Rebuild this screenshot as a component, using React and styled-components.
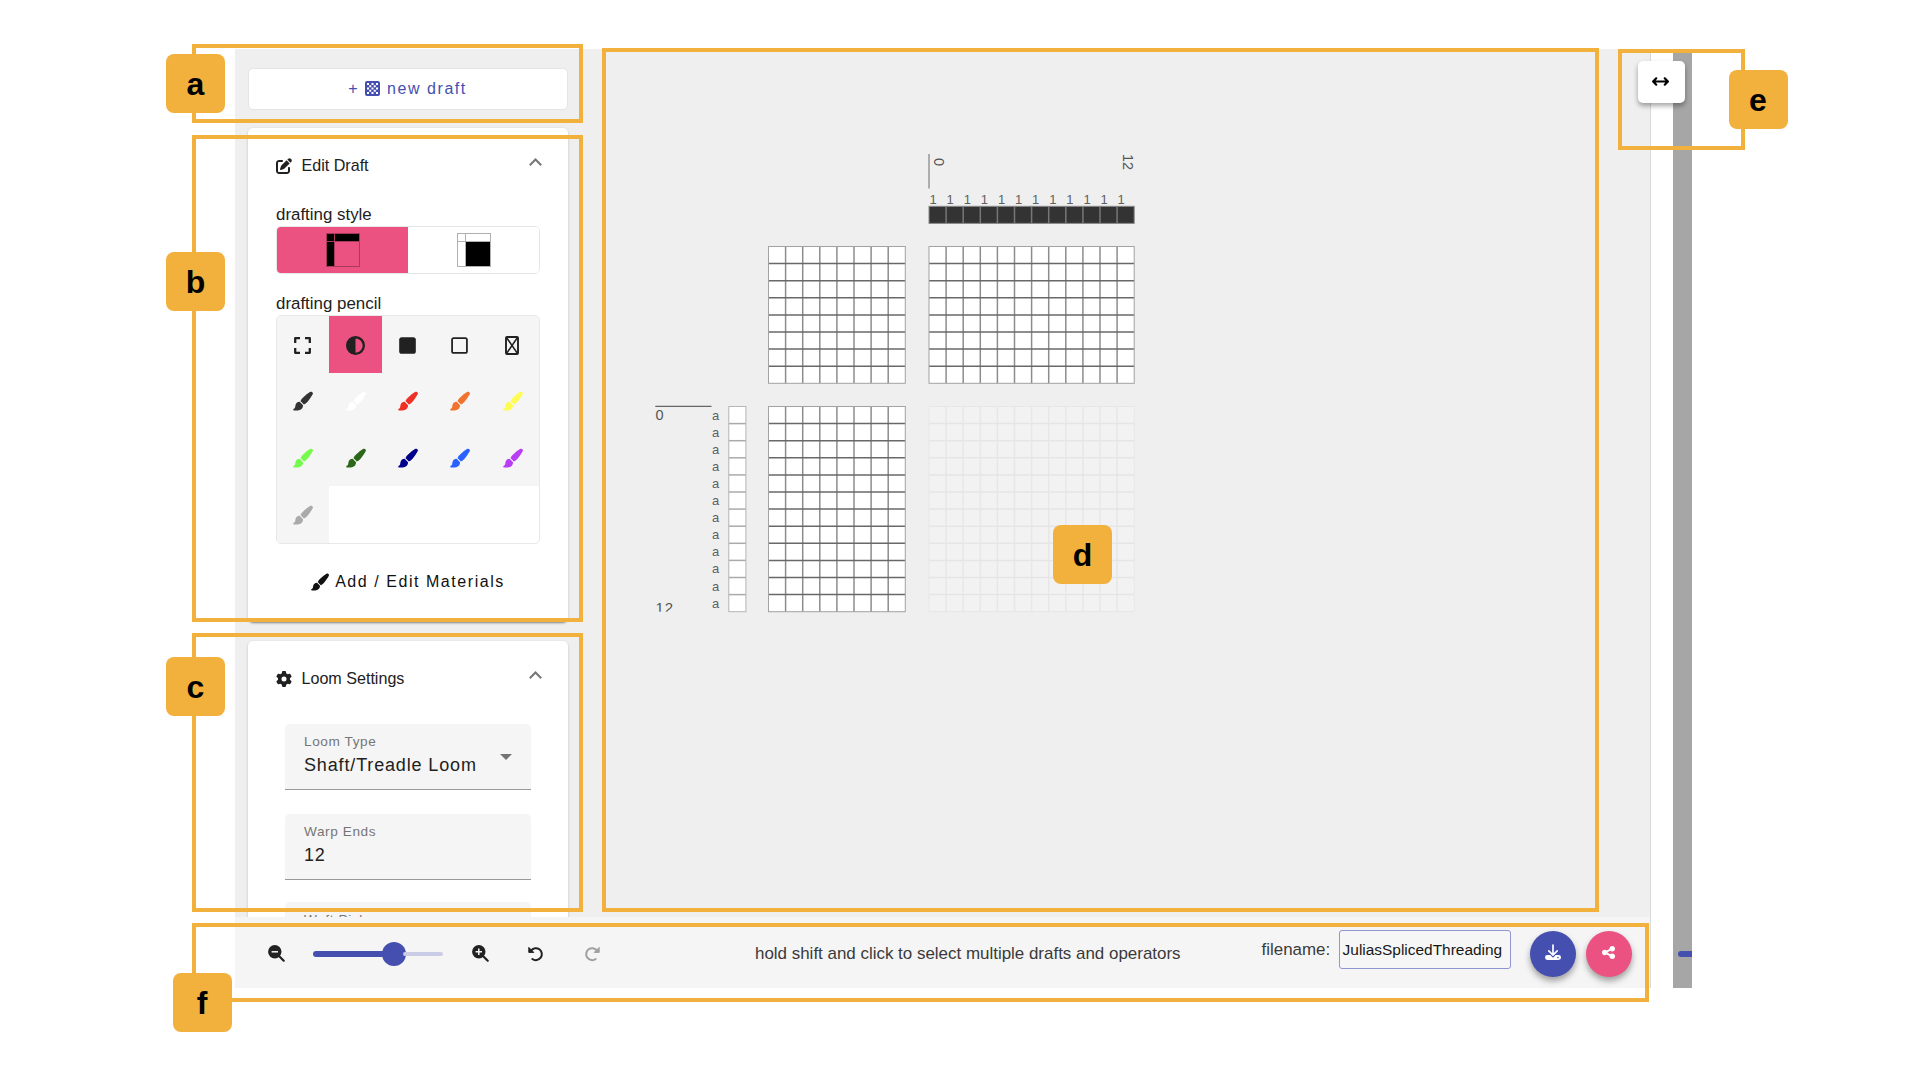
import React from 'react';
import styled, { createGlobalStyle, css } from 'styled-components';
import { FaPenToSquare, FaGear, FaCircleHalfStroke, FaSquare, FaRegSquare, FaShareNodes, FaArrowsLeftRight } from 'react-icons/fa6';

const PINK = '#ec5281';
const INDIGO = '#444fb0';
const ORANGE = '#f2b03d';

const Global = createGlobalStyle`
  * { box-sizing: border-box; }
  body { margin: 0; background: #fff; font-family: "Liberation Sans", Arial, sans-serif; color: #212121; }
  button { font: inherit; border: 0; padding: 0; margin: 0; }
`;

const Page = styled.main`
  position: relative;
  width: 1920px;
  height: 1080px;
  overflow: hidden;
  padding: 49px 0 0 235px;
`;

const Shell = styled.div`
  display: grid;
  grid-template-columns: 1416px 22px 19px;
  height: 939px;
`;

const Mixer = styled.div`
  display: grid;
  grid-template-rows: 868px 71px;
  background: #efefef;
  border-right: 1px solid #dadada;
`;

const Main = styled.div`
  display: flex;
  overflow: hidden;
`;

const Sidebar = styled.aside`
  width: 346px;
  padding: 19px 13px 0;
  display: flex;
  flex-direction: column;
  flex: none;
`;

const NewDraft = styled.button`
  flex: none;
  height: 42px;
  margin: 0 0 18px;
  padding-bottom: 1px;
  padding-right: 1px;
  border: 1px solid #e4e4e4;
  border-radius: 5px;
  background: #fff;
  color: ${INDIGO};
  font-size: 16px;
  letter-spacing: 1.55px;
  display: flex;
  align-items: center;
  justify-content: center;
  gap: 6px;
  svg { margin-right: 1px; }
`;

const Card = styled.section`
  flex: none;
  height: ${(p) => p.$height}px;
  margin-bottom: 19px;
  padding: 0 28px;
  background: #fff;
  border-radius: 5px;
  box-shadow: 0 3px 2px -2px rgba(0, 0, 0, 0.3), 0 1px 3px rgba(0, 0, 0, 0.2);
`;

const CardHeader = styled.header`
  display: flex;
  align-items: center;
  height: 75px;
  font-size: 16.1px;
  svg { flex: none; }
`;

const CardTitle = styled.span`
  flex: 1;
  margin-left: 9.5px;
`;

const ChevronSlot = styled.span`
  display: flex;
  margin: 0 -2px 7px 0;
`;

const Label = styled.div`
  height: 23px;
  line-height: 23px;
  font-size: 16.9px;
  margin-top: ${(p) => p.$top}px;
`;

const StyleToggle = styled.div`
  display: grid;
  grid-template-columns: 1fr 1fr;
  height: 48px;
  border: 1px solid #e6e6e6;
  border-radius: 5px;
  overflow: hidden;
`;

const Cell = styled.button`
  display: flex;
  align-items: center;
  justify-content: center;
  background: ${(p) => p.$bg};
  color: ${(p) => p.$color || '#212121'};
`;

const Pencils = styled.div`
  display: grid;
  grid-template-columns: repeat(5, 1fr);
  grid-template-rows: repeat(4, 1fr);
  height: 229px;
  border: 1px solid #e8e8e8;
  border-radius: 5px;
  overflow: hidden;
`;

const ToolCell = styled(Cell)`
  padding: 2px 1px 0 0;
`;

const Materials = styled.button`
  width: 100%;
  margin-top: 28px;
  height: 20px;
  display: flex;
  align-items: center;
  justify-content: center;
  gap: 6px;
  background: none;
  color: #111;
  font-size: 16px;
  letter-spacing: 1.55px;
`;

const Field = styled.div`
  display: flex;
  align-items: center;
  justify-content: space-between;
  height: 66px;
  margin: ${(p) => p.$top}px 9px 24px;
  padding: 0 19px 2px;
  background: #f5f5f5;
  border-bottom: 1px solid #999;
  border-radius: 5px 5px 0 0;
`;

const FieldText = styled.div`
  white-space: nowrap;
  small {
    display: block;
    font-size: 13.6px;
    line-height: 20px;
    letter-spacing: 0.6px;
    color: #757575;
  }
  span {
    display: block;
    font-size: 18px;
    line-height: 27px;
    letter-spacing: 0.85px;
  }
`;

const Caret = styled.i`
  border: 6px solid transparent;
  border-top-color: #757575;
  border-bottom: 0;
  margin: 3px 0 0;
`;

const Workspace = styled.div`
  flex: 1;
  padding: 95px 0 0 69px;
  svg { display: block; }
`;

const Footer = styled.footer`
  display: flex;
  align-items: center;
  background: #f5f5f5;
  padding-left: 33px;
  padding-top: 2px;
`;

const IconButton = styled.button`
  display: flex;
  background: none;
  color: ${(p) => (p.$dim ? '#a0a0a0' : '#212121')};
  margin-right: ${(p) => p.$gap}px;
`;

const Track = styled.div`
  display: flex;
  align-items: center;
  width: 130px;
  height: 24px;
  margin-right: 29px;
`;

const TrackPart = styled.span`
  height: ${(p) => (p.$on ? 6 : 4)}px;
  width: ${(p) => p.$w}px;
  background: ${(p) => (p.$on ? INDIGO : '#cacce6')};
  border-radius: 3px;
`;

const Thumb = styled.span`
  flex: none;
  width: 24px;
  height: 24px;
  margin: 0 -3px;
  border-radius: 50%;
  background: ${INDIGO};
`;

const Hint = styled.p`
  margin: 0 81px 0 155px;
  font-size: 16.95px;
  white-space: nowrap;
  color: #3a3a3a;
`;

const FileLabel = styled.label`
  display: flex;
  align-items: center;
  gap: 9px;
  margin-top: -8px;
  font-size: 16.9px;
  color: #3a3a3a;
`;

const FileInput = styled.span`
  width: 172px;
  height: 39px;
  line-height: 37px;
  padding-left: 2.5px;
  border: 1px solid #9096cf;
  border-radius: 3px;
  background: #f6f6f6;
  color: #161616;
  font-size: 15.45px;
`;

const Fab = styled.button`
  display: flex;
  align-items: center;
  justify-content: center;
  width: 46px;
  height: 46px;
  margin-left: ${(p) => p.$gap}px;
  padding-bottom: 2px;
  border-radius: 50%;
  background: ${(p) => p.$bg};
  color: #fff;
  box-shadow: 0 4px 6px rgba(0, 0, 0, 0.35);
`;

const DetailBar = styled.div`
  display: flex;
  flex-direction: column;
  justify-content: flex-end;
  align-items: flex-end;
  padding-bottom: 31px;
  background: #a6a6a6;
  overflow: hidden;
  span { width: 14px; height: 6px; background: ${INDIGO}; border-radius: 3px 0 0 3px; }
`;

const Expander = styled.button`
  position: absolute;
  left: 1638px;
  top: 61px;
  width: 47px;
  height: 42px;
  display: flex;
  align-items: center;
  justify-content: center;
  padding: 0 2px 1px 0;
  border-radius: 5px;
  background: #fff;
  color: #000;
  box-shadow: 0 3px 5px rgba(0, 0, 0, 0.35);
`;

const overlay = css`
  position: absolute;
  left: ${(p) => p.$x}px;
  top: ${(p) => p.$y}px;
`;

const Frame = styled.div`
  ${overlay}
  width: ${(p) => p.$w}px;
  height: ${(p) => p.$h}px;
  border: 4px solid ${ORANGE};
  pointer-events: none;
`;

const Badge = styled.div`
  ${overlay}
  width: 59px;
  height: 59px;
  border-radius: 8px;
  background: ${ORANGE};
  color: #000;
  font-size: 32px;
  font-weight: 700;
  line-height: 61px;
  text-align: center;
`;

const CheckIcon = () => (
  <svg width="15" height="15" viewBox="0 0 15 15">
    <rect width="15" height="15" rx="2" fill={INDIGO} />
    {Array.from({ length: 25 }, (_, i) => i).filter((i) => i % 2 === 0).map((i) => (
      <rect key={i} x={2 + (i % 5) * 2.25} y={2 + Math.floor(i / 5) * 2.25} width="2" height="2" fill="#fff" />
    ))}
  </svg>
);

const Chevron = () => (
  <ChevronSlot>
    <svg width="13" height="8" viewBox="0 0 13 8" fill="none" stroke="#757575" strokeWidth="2">
      <path d="M.8 7.2 6.5 1.5l5.7 5.7" />
    </svg>
  </ChevronSlot>
);

const Brush = ({ size = 20 }) => (
  <svg width={size} height={size} viewBox="0 0 20 20" fill="currentColor">
    <path d="M19 .9c.9.5 1.200 1.300.8 2.200-.9 2-3.700 6-5.500 7.900-.9 1-2.100 1.900-3.400 2.500L7.500 10c.6-1.500 1.500-2.600 2.600-3.600C12.100 4.500 15.300 1.900 17 1c.7-.4 1.400-.4 2-.1z" />
    <path d="M6.700 10.700l3.300 3.500c.2 2.800-2 5.300-5.300 5.300H1c-1-.1-1.100-1.300-.2-1.700 1.400-.6 1.400-1.700 1.600-3.300.3-2.300 2.100-3.900 4.300-3.800z" />
  </svg>
);

const Rotate = ({ flip }) => (
  <svg width="16" height="16" viewBox="0 0 16 16" fill="none" stroke="currentColor">
    <g transform={flip ? 'translate(16 0) scale(-1 1)' : undefined}>
      <path d="M3 4.600A6 6 0 1 1 4.300 13" strokeWidth="2" strokeLinecap="round" />
      <path d="M.8 1.400v5h5z" fill="currentColor" strokeWidth="1" strokeLinejoin="round" />
    </g>
  </svg>
);

const StyleIcon = ({ filled }) => {
  const line = filled ? '#b0b0b0' : '#a83a5c';
  return (
    <svg width="34" height="34" viewBox="0 0 34 34" stroke={line}>
      <rect x=".5" y=".5" width="8" height="8" fill={filled ? '#fff' : '#000'} />
      <rect x="8.5" y=".5" width="25" height="8" fill={filled ? '#fff' : '#000'} />
      <rect x=".5" y="8.5" width="8" height="25" fill={filled ? '#fff' : '#000'} />
      <rect x="8.5" y="8.5" width="25" height="25" fill={filled ? '#000' : PINK} />
    </svg>
  );
};

const ExpandIcon = () => (
  <svg width="17" height="17" viewBox="0 0 17 17" fill="none" stroke="#212121" strokeWidth="2.3" strokeLinejoin="round">
    <path d="M1.200 6V1.200H6M11 1.200h4.800V6M15.800 11v4.800H11M6 15.800H1.200V11" />
  </svg>
);

const CrossBox = () => (
  <svg width="14" height="19" viewBox="0 0 14 19" fill="none" stroke="#212121">
    <rect x="1" y="1" width="12" height="17" rx="1" strokeWidth="1.9" />
    <path d="M1.5 1.5l11 16M12.5 1.5l-11 16" strokeWidth="1.5" />
  </svg>
);

const Zoom = ({ plus }) => (
  <svg width="17" height="17" viewBox="0 0 17 17">
    <circle cx="6.800" cy="6.800" r="6.700" fill="#212121" />
    <path d="M10.500 10.500l5.200 5.200" stroke="#212121" strokeWidth="2.2" strokeLinecap="round" />
    <path d={plus ? 'M3.600 6.800h6.400M6.800 3.600v6.400' : 'M3.600 6.800h6.400'} stroke="#f5f5f5" strokeWidth="1.5" />
  </svg>
);

const Download = () => (
  <svg width="16" height="17" viewBox="0 0 16 17" fill="none" stroke="#fff">
    <rect x="0" y="11" width="16" height="5" rx="2.4" fill="#fff" stroke="none" />
    <path d="M3.400 6.400 8 11l4.600-4.600" strokeWidth="4" stroke={INDIGO} />
    <path d="M8 1v9.500M3.800 6.800 8 11l4.200-4.200" strokeWidth="1.7" strokeLinecap="round" />
    <circle cx="13" cy="13.600" r=".8" fill={INDIGO} stroke="none" />
  </svg>
);

const CELL = 17.1;

const Grid = ({ x, y, cols, rows, fill = '#fff', h = '#686868', v = '#8c8c8c', edge = '#a2a2a2' }) => {
  const w = cols * CELL;
  const ht = rows * CELL;
  return (
    <g transform={`translate(${x} ${y})`} strokeWidth="1.5">
      <rect width={w} height={ht} fill={fill} />
      {Array.from({ length: cols - 1 }, (_, i) => (
        <path key={i} d={`M${(i + 1) * CELL} 0V${ht}`} stroke={v} />
      ))}
      {Array.from({ length: rows - 1 }, (_, i) => (
        <path key={i} d={`M0 ${(i + 1) * CELL}H${w}`} stroke={h} />
      ))}
      <rect width={w} height={ht} fill="none" stroke={edge} strokeWidth="1" />
    </g>
  );
};

const twelve = Array.from({ length: 12 }, (_, i) => i);

const Draft = () => (
  <svg width="500" height="480" viewBox="650 144 500 480" fill="#555" fontSize="14.5">
    <path d="M929 154V188.500" stroke="#8a8a8a" strokeWidth="1.3" />
    <text transform="translate(934 158) rotate(90)">0</text>
    <text transform="translate(1123 154) rotate(90)">12</text>
    {twelve.map((i) => (
      <text key={i} x={929.5 + i * CELL} y="203.500" fontSize="13" fill="#5f5f5f">1</text>
    ))}
    <Grid x={929} y={206.3} cols={12} rows={1} fill="#333" v="#777" edge="#8a8a8a" />
    <Grid x={768.5} y={246.5} cols={8} rows={8} />
    <Grid x={929} y={246.5} cols={12} rows={8} />
    <path d="M655.300 406.300H711.500" stroke="#666" strokeWidth="1.2" />
    <text x="655.500" y="419.500">0</text>
    <svg x="650" y="600" width="40" height="11.700" viewBox="650 600 40 11.700">
      <text x="655.500" y="613" letterSpacing="1" fontSize="15">12</text>
    </svg>
    {twelve.map((i) => (
      <text key={i} x="712" y={419.5 + i * CELL} fontSize="13" fill="#5f5f5f">a</text>
    ))}
    <Grid x={728.8} y={406.5} cols={1} rows={12} h="#aaa" edge="#b5b5b5" />
    <Grid x={768.5} y={406.5} cols={8} rows={12} />
    <Grid x={929} y={406.5} cols={12} rows={12} fill="#f2f2f2" h="#e5e5e5" v="#e7e7e7" edge="#e7e7e7" />
  </svg>
);

const brushes = ['#333', '#fff', '#ee3124', '#f0732e', '#fdfd54', '#75fb4c', '#2c6619', '#00008b', '#2962ff', '#b93df5', '#aaa'];

const frames = [
  [192, 44, 391, 79], [192, 134.5, 391, 487], [192, 633, 391, 279],
  [601.5, 48, 997, 864], [1617.5, 49, 127, 101], [192, 922.5, 1457, 79],
];

const badges = [['a', 166, 53.5], ['b', 166, 252], ['c', 166, 656.5], ['d', 1053, 524.7], ['e', 1728.5, 69.5], ['f', 172.5, 973.3]];

export default function App() {
  return (
    <Page>
      <Global />
      <Shell>
        <Mixer>
          <Main>
            <Sidebar>
              <NewDraft><span>+</span><CheckIcon /><span>new draft</span></NewDraft>
              <Card $height={494}>
                <CardHeader><FaPenToSquare size={16} /><CardTitle>Edit Draft</CardTitle><Chevron /></CardHeader>
                <Label $top={0}>drafting style</Label>
                <StyleToggle>
                  <Cell $bg={PINK}><StyleIcon /></Cell>
                  <Cell $bg="#fff"><StyleIcon filled /></Cell>
                </StyleToggle>
                <Label $top={18}>drafting pencil</Label>
                <Pencils>
                  <ToolCell $bg="#f5f5f5"><ExpandIcon /></ToolCell>
                  <ToolCell $bg={PINK}><FaCircleHalfStroke size={19} /></ToolCell>
                  <ToolCell $bg="#f5f5f5"><FaSquare size={19} /></ToolCell>
                  <ToolCell $bg="#f5f5f5"><FaRegSquare size={19} /></ToolCell>
                  <ToolCell $bg="#f5f5f5"><CrossBox /></ToolCell>
                  {brushes.map((c) => (
                    <Cell key={c} $bg="#f5f5f5" $color={c}><Brush /></Cell>
                  ))}
                </Pencils>
                <Materials><Brush size={18} /><span>Add / Edit Materials</span></Materials>
              </Card>
              <Card $height={400}>
                <CardHeader><FaGear size={16} /><CardTitle>Loom Settings</CardTitle><Chevron /></CardHeader>
                <Field $top={8}><FieldText><small>Loom Type</small><span>Shaft/Treadle Loom</span></FieldText><Caret /></Field>
                <Field $top={0}><FieldText><small>Warp Ends</small><span>12</span></FieldText></Field>
                <Field $top={-2}><FieldText><small>Weft Picks</small><span>12</span></FieldText></Field>
              </Card>
            </Sidebar>
            <Workspace><Draft /></Workspace>
          </Main>
          <Footer>
            <IconButton $gap={28}><Zoom /></IconButton>
            <Track><TrackPart $on $w={73} /><Thumb /><TrackPart $w={40} /></Track>
            <IconButton $gap={39}><Zoom plus /></IconButton>
            <IconButton $gap={40}><Rotate /></IconButton>
            <IconButton $dim $gap={0}><Rotate flip /></IconButton>
            <Hint>hold shift and click to select multiple drafts and operators</Hint>
            <FileLabel>filename:<FileInput>JuliasSplicedThreading</FileInput></FileLabel>
            <Fab $bg={INDIGO} $gap={18.5}><Download /></Fab>
            <Fab $bg={PINK} $gap={10}><FaShareNodes size={15} /></Fab>
          </Footer>
        </Mixer>
        <div />
        <DetailBar><span /></DetailBar>
      </Shell>
      <Expander><FaArrowsLeftRight size={17} /></Expander>
      {frames.map(([x, y, w, h]) => <Frame key={`${x}-${y}`} $x={x} $y={y} $w={w} $h={h} />)}
      {badges.map(([t, x, y]) => <Badge key={t} $x={x} $y={y}>{t}</Badge>)}
    </Page>
  );
}
